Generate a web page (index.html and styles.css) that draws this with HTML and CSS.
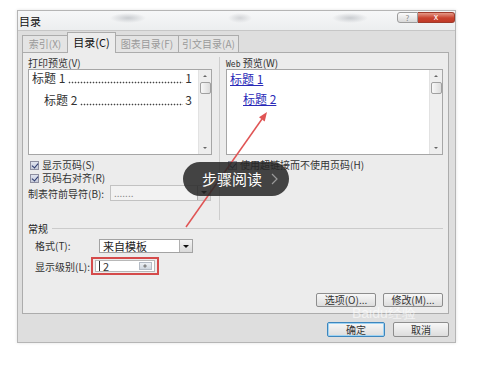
FILE: index.html
```html
<!DOCTYPE html>
<html>
<head>
<meta charset="UTF-8">
<title>目录</title>
<link rel="stylesheet" href="styles.css">
</head>
<body>
<div id="stage">
<div class="win">
  <div class="titlebar">
    <span class="title">目录</span>
    <div class="ctrls"><span class="help">?</span><span class="close">x</span></div>
  </div>
  <div class="tabs">
    <span class="tab t1">索引(X)</span>
    <span class="tab t2 on">目录(C)</span>
    <span class="tab t3">图表目录(F)</span>
    <span class="tab t4">引文目录(A)</span>
  </div>
  <div class="panel">
    <div class="top">
      <div class="col">
        <div class="lbl">打印预览(V)</div>
        <div class="box">
          <div class="list">
            <div class="item"><span>标题 1</span><span class="dots"></span><span>1</span></div>
            <div class="item sub"><span>标题 2</span><span class="dots"></span><span>3</span></div>
          </div>
          <div class="sb"><span class="up"></span><span class="thumb"></span><span class="down"></span></div>
        </div>
        <div class="cbrow"><span class="cb"></span>显示页码(S)</div>
        <div class="cbrow"><span class="cb"></span>页码右对齐(R)</div>
        <div class="leader">
          <span class="llbl">制表符前导符(B):</span>
          <span class="sel off"><span class="seltxt">.......</span><span class="dd"></span></span>
        </div>
      </div>
      <div class="col right">
        <div class="lbl"><span class="web">Web</span> 预览(W)</div>
        <div class="box">
          <div class="list">
            <div class="link">标题 1</div>
            <div class="link sub">标题 2</div>
          </div>
          <div class="sb"><span class="up"></span><span class="thumb"></span><span class="down"></span></div>
        </div>
        <div class="cbrow"><span class="cb"></span>使用超链接而不使用页码(H)</div>
      </div>
    </div>
    <div class="grp">常规</div>
    <div class="row">
      <span class="rlbl">格式(T):</span>
      <span class="sel combo"><span class="seltxt">来自模板</span><span class="dd"></span></span>
    </div>
    <div class="row">
      <span class="rlbl short">显示级别(L):</span>
      <span class="hl"><span class="spin"><span class="spintxt">2</span><span class="spinbtn"></span></span></span>
    </div>
    <div class="btnrow">
      <span class="btn">选项(O)...</span>
      <span class="btn">修改(M)...</span>
    </div>
  </div>
  <div class="foot">
    <span class="btn big def">确定</span>
    <span class="btn big">取消</span>
  </div>
</div>

<svg class="arrow" width="500" height="370">
  <line x1="186" y1="227" x2="262" y2="119" stroke="#e05454" stroke-width="1.5"/>
  <polygon points="267,112 264.7,121.4 259,117.3" fill="#e05454"/>
</svg>
<div class="pill">步骤阅读<svg width="8" height="12"><polyline points="1,1 6,6 1,11" fill="none" stroke="#9a9a9a" stroke-width="1.2"/></svg></div>
<div class="mark">Baidu经验</div>
</div>
</body>
</html>
```

FILE: styles.css
```css
*{margin:0;padding:0;box-sizing:border-box}
body{width:500px;height:370px;background:#fff;font-family:"Noto Sans CJK SC","Liberation Sans",sans-serif;font-size:10px;color:#222;overflow:hidden}
#stage{position:relative;width:500px;height:370px;padding:10px 0 0 17px}

.win{width:439px;height:333px;border:1px solid #b5b5b5;background:#dedede;display:flex;flex-direction:column;box-shadow:0 0 3px rgba(0,0,0,.12)}
.titlebar{height:20px;display:flex;justify-content:space-between;align-items:flex-start;border-bottom:1px solid #c6c6c6;
  background:radial-gradient(ellipse 18px 5px at 110px 7px,#c9ccd0,transparent),radial-gradient(ellipse 12px 5px at 222px 7px,#d3d5d8,transparent),radial-gradient(ellipse 18px 5px at 332px 7px,#c9ccd0,transparent),linear-gradient(#f6f7f8,#eceeef)}
.title{font-size:11px;line-height:14px;padding:3px 0 0 1px;color:#111}
.ctrls{display:flex;margin-top:1px}
.help{width:21px;height:11px;border:1px solid #9c9c9c;border-radius:3px 0 0 3px;background:linear-gradient(#fbfbfb,#d9d9d9);font-size:8px;line-height:9px;text-align:center;color:#8a8a8a}
.close{width:37px;height:11px;border:1px solid #9e3b2c;border-left:none;border-radius:0 3px 3px 0;background:linear-gradient(#e59a88,#c9432f 55%,#c03a28);font-size:9px;line-height:8px;text-align:center;color:#fff}

.tabs{height:21px;display:flex;align-items:flex-end;padding-left:4px}
.tab{height:17px;border:1px solid #acacac;border-bottom:none;margin-right:-1px;background:#e4e4e4;color:#9a9a9a;font-size:10px;line-height:15px;text-align:center}
.t1{width:46px}
.t2{width:49px}
.t3{width:64px}
.t4{width:61px}
.tab.on{height:21px;margin-bottom:-1px;position:relative;background:#ececec;color:#111;font-size:11px;line-height:18px}

.panel{margin-left:4px;width:427px;height:262px;border:1px solid #acacac;background:#ececec;padding:4px 5px 6px 5px;display:flex;flex-direction:column}
.top{display:grid;grid-template-columns:184px 1fr;column-gap:7px;height:163px}
.right{border-left:1px solid #cdcdcd;padding-left:6px}
.lbl{height:12px;line-height:12px;font-size:10px;color:#333}
.web{font-family:"DejaVu Sans Mono",monospace;font-size:8px}
.box{height:86px;border:1px solid #a6a6a6;background:#fff;display:flex}
.list{flex:1;padding:0 6px 0 3px;min-width:0}
.item{display:flex;height:16px;line-height:16px;font-size:12px;color:#333;white-space:nowrap}
.item.sub{margin-top:6px;padding-left:12px}
.dots{flex:1;margin:0 2px 0 3px;background:radial-gradient(circle,#444 .7px,transparent 1.1px) 0 11px/3px 3px repeat-x}
.link{height:16px;line-height:16px;font-size:12px;color:#2b2bb8;text-decoration:underline;margin-top:1px}
.link.sub{margin-top:4px;padding-left:13px}
.sb{width:13px;background:#eeeeee;border-left:1px solid #e2e2e2;display:flex;flex-direction:column;align-items:center}
.up,.down{width:0;height:0;border-left:2px solid transparent;border-right:2px solid transparent}
.up{border-bottom:2px solid #666;margin-top:5px}
.thumb{width:11px;height:12px;margin-top:5px;border:1px solid #a0a0a0;border-radius:2px;background:linear-gradient(90deg,#f8f8f8,#dcdcdc)}
.down{border-top:2px solid #666;margin-top:auto;margin-bottom:5px}

.cbrow{display:flex;align-items:center;gap:3px;height:12px;line-height:12px;margin-top:1px;padding-left:2px;white-space:nowrap;color:#333}
.box + .cbrow{margin-top:4px}
.cb{width:9px;height:9px;border:1px solid #8e8fa0;background:linear-gradient(#dfe3ee,#c6cbd9);position:relative}
.cb::after{content:"";position:absolute;left:2px;top:0;width:3px;height:5px;border:solid #2d3a6e;border-width:0 1.5px 1.5px 0;transform:rotate(40deg)}

.leader{display:flex;align-items:center;height:16px;margin-top:1px}
.llbl{width:82px;color:#333}
.sel{display:flex;align-items:center;border:1px solid #a3a3a3;background:#fff}
.sel.off{flex:1;height:16px;margin-right:1px;background:#f2f2f2;border-color:#c2c2c2}
.seltxt{flex:1;padding-left:3px;color:#888;line-height:12px}
.dd{width:13px;height:100%;border-left:1px solid #b0b0b0;background:linear-gradient(#f4f4f4,#d9d9d9);position:relative}
.dd::after{content:"";position:absolute;left:3px;top:5px;border-left:3px solid transparent;border-right:3px solid transparent;border-top:3px solid #111}

.grp{display:flex;align-items:center;gap:4px;height:12px;margin-top:2px;color:#222}
.grp::after{content:"";flex:1;border-top:1px solid #cbcbcb}
.row{display:flex;align-items:center;padding-left:7px;margin-top:4px;color:#333}
.rlbl{width:64px}
.rlbl.short{width:56px}
.combo{width:94px;height:14px}
.combo .seltxt{color:#222;font-size:11px}
.hl{border:2px solid #d54b4b;padding:1px 2px;height:18px;width:68px}
.spin{display:flex;height:12px;border:1px solid #b8b8b8;background:#fff}
.spintxt{flex:1;padding-left:3px;line-height:10px;font-size:11px;border-left:1px solid #333;margin-left:3px}
.spinbtn{width:13px;margin:1px 2px 1px 0;background:linear-gradient(#eef1f5,#cfd6df);border:1px solid #b5bcc6;position:relative}
.spinbtn::before{content:"";position:absolute;left:3px;top:1px;border-left:2px solid transparent;border-right:2px solid transparent;border-bottom:2px solid #888}
.spinbtn::after{content:"";position:absolute;left:3px;bottom:1px;border-left:2px solid transparent;border-right:2px solid transparent;border-top:2px solid #888}

.btnrow{margin-top:auto;display:flex;justify-content:flex-end;gap:7px}
.btn{width:60px;height:14px;border:1px solid #8d8d8d;border-radius:2px;background:linear-gradient(#f7f7f7,#dddddd);font-size:10px;line-height:12px;text-align:center;color:#333}
.foot{display:flex;justify-content:flex-end;gap:8px;padding:8px 6px 0 0}
.btn.big{width:56px;height:15px;line-height:13px}
.btn.def{width:58px;border-color:#3d86bd;box-shadow:inset 0 0 0 1px #9fd3f3}

.arrow{position:absolute;left:0;top:0}
.pill{position:absolute;left:183px;top:162px;width:106px;height:34px;border-radius:17px;background:rgba(38,38,38,.86);color:#fff;font-size:15px;line-height:34px;padding-left:19px;display:flex;align-items:center;gap:9px}
.mark{position:absolute;left:352px;top:305px;font-size:14px;color:rgba(255,255,255,.6);font-family:"Liberation Sans",sans-serif}
```
